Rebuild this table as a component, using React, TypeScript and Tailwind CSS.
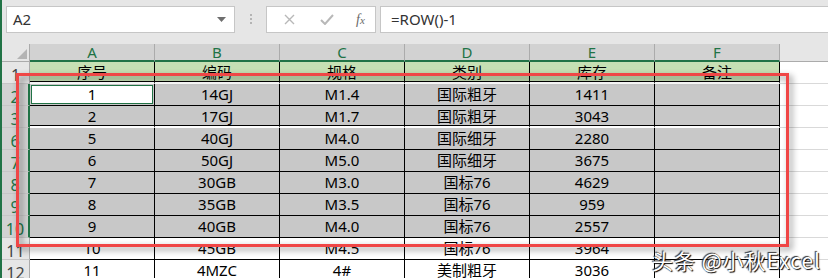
import React from 'react';

type Row = { n: string; cells: string[]; sel: boolean; head?: boolean; dbl?: boolean };

const rows: Row[] = [
  { n: '1', cells: ['序号', '编码', '规格', '类别', '库存', '备注'], sel: false, head: true, dbl: true },
  { n: '2', cells: ['1', '14GJ', 'M1.4', '国际粗牙', '1411', ''], sel: true },
  { n: '3', cells: ['2', '17GJ', 'M1.7', '国际粗牙', '3043', ''], sel: true, dbl: true },
  { n: '6', cells: ['5', '40GJ', 'M4.0', '国际细牙', '2280', ''], sel: true },
  { n: '7', cells: ['6', '50GJ', 'M5.0', '国际细牙', '3675', ''], sel: true },
  { n: '8', cells: ['7', '30GB', 'M3.0', '国标76', '4629', ''], sel: true },
  { n: '9', cells: ['8', '35GB', 'M3.5', '国标76', '959', ''], sel: true },
  { n: '10', cells: ['9', '40GB', 'M4.0', '国标76', '2557', ''], sel: true },
  { n: '11', cells: ['10', '45GB', 'M4.5', '国标76', '3964', ''], sel: false },
  { n: '12', cells: ['11', '4MZC', '4#', '美制粗牙', '3036', ''], sel: false },
];

const cols = ['A', 'B', 'C', 'D', 'E', 'F'];

const font = { fontFamily: '"Noto Sans", "Noto Sans CJK SC", sans-serif' };

export default function App() {
  return (
    <div className="relative h-[278px] w-[828px] overflow-hidden bg-[#e6e6e6] border-l-2 border-[#217346]" style={font}>
      {/* 编辑栏 */}
      <div className="flex h-[44px] items-start pt-[6px] pl-[4px]">
        <div className="flex h-[27px] w-[229px] items-center justify-between border border-[#c6c6c6] bg-white pl-[6px] pr-[8px]">
          <span className="text-[15px] text-[#333]">A2</span>
          <svg width="9" height="5" viewBox="0 0 9 5"><path d="M0 0h9L4.5 5z" fill="#6e6e6e" /></svg>
        </div>
        <div className="flex w-[31px] flex-col items-center gap-[2px] pt-[8px]">
          <span className="h-[2px] w-[2px] bg-[#b4b4b4]" />
          <span className="h-[2px] w-[2px] bg-[#b4b4b4]" />
          <span className="h-[2px] w-[2px] bg-[#b4b4b4]" />
        </div>
        <div className="flex h-[27px] w-[110px] items-center border border-[#c6c6c6] bg-white">
          <svg className="ml-[17px]" width="11" height="11" viewBox="0 0 11 11">
            <path d="M1 1l9 9M10 1l-9 9" stroke="#b8b8b8" strokeWidth="1.4" />
          </svg>
          <svg className="ml-[25px]" width="14" height="11" viewBox="0 0 14 11">
            <path d="M1 6l4 4 8-9" fill="none" stroke="#b8b8b8" strokeWidth="2" />
          </svg>
          <span className="ml-[22px] text-[14px] italic text-[#6a6a6a]" style={{ fontFamily: '"Liberation Serif", serif' }}>
            f<span className="text-[11px]">x</span>
          </span>
        </div>
        <div className="ml-[4px] flex h-[27px] flex-1 items-center border border-r-0 border-[#c6c6c6] bg-white pl-[10px]">
          <span className="text-[15px] text-[#333]">=ROW()-1</span>
        </div>
      </div>

      {/* 列标题 */}
      <div className="flex h-[18px]">
        <div className="relative w-[28px] border-r border-b border-[#ababab] bg-[#e6e6e6]">
          <svg className="absolute right-[2px] bottom-[2px]" width="10" height="10" viewBox="0 0 10 10">
            <path d="M10 0v10H0z" fill="#b4b4b4" />
          </svg>
        </div>
        {cols.map(c => (
          <div key={c} className="flex w-[125px] items-center justify-center border-r border-[#ababab] border-b-2 border-b-[#217346] bg-[#d2d2d2] text-[15px] leading-none text-[#217346]">
            {c}
          </div>
        ))}
        <div className="flex-1 border-b border-[#ababab] bg-[#e6e6e6]" />
      </div>

      {/* 数据行 */}
      {rows.map(r => (
        <div key={r.n} className="flex h-[22px]">
          <div
            className={`flex w-[28px] items-end justify-center text-[16px] leading-none border-b border-[#c6c6c6] ${
              r.sel ? 'bg-[#d2d2d2] text-[#217346] border-r-2 border-r-[#217346]' : 'bg-[#e6e6e6] text-[#444] border-r border-r-[#ababab]'
            }`}
          >
            {r.n}
          </div>
          {r.cells.map((t, i) => {
            const active = r.n === '2' && i === 0;
            const bg = r.head ? 'bg-[#c6e0b4]' : r.sel ? 'bg-[#c8c8c8]' : 'bg-white';
            return (
              <div
                key={i}
                className={`flex w-[125px] border-r border-black ${bg} ${
                  r.dbl ? 'border-b-2 border-b-white shadow-[inset_0_-1px_0_#000]' : 'border-b border-b-black'
                } ${i === 0 ? 'w-[124px]' : ''}`}
              >
                <div
                  className={`flex flex-1 items-center justify-center text-[15px] text-black ${
                    active ? 'm-[1px] border border-[#217346] bg-white' : ''
                  }`}
                >
                  {t}
                </div>
              </div>
            );
          })}
          <div className="flex-1 border-b border-[#d9d9d9] bg-white" />
        </div>
      ))}

      {/* 红框 */}
      <div className="absolute left-[14px] top-[73px] h-[174px] w-[773px] border-[3px] border-[#f04646] drop-shadow-[3px_3px_3px_rgba(0,0,0,0.45)]" />

      {/* 水印 */}
      <div className="absolute left-[650px] top-[245px] text-[21px] tracking-[1px] text-white [text-shadow:1px_1px_1px_#000,-1px_-1px_1px_#333]" style={{ fontFamily: '"Noto Sans CJK SC", sans-serif' }}>
        头条 @小秋Excel
      </div>
    </div>
  );
}
